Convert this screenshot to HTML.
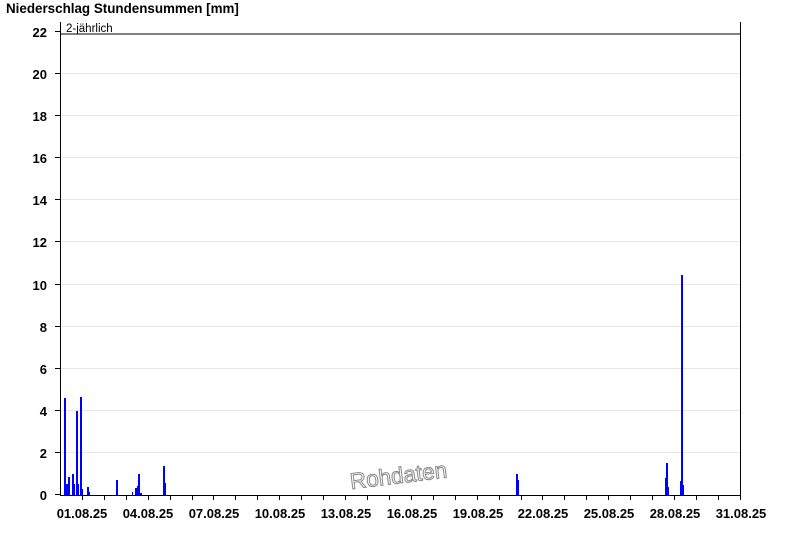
<!DOCTYPE html>
<html><head><style>body{margin:0;background:#fff}svg{display:block}</style></head>
<body>
<svg width="800" height="550" xmlns="http://www.w3.org/2000/svg" font-family="Liberation Sans, Arial, sans-serif">
<rect width="800" height="550" fill="#fff"/>
<text x="6" y="13" font-size="13.4" font-weight="bold" fill="#000">Niederschlag Stundensummen [mm]</text>
<g stroke="#e6e6e6" stroke-width="1">
<line x1="61" x2="740" y1="73.5" y2="73.5"/><line x1="61" x2="740" y1="115.5" y2="115.5"/>
<line x1="61" x2="740" y1="157.5" y2="157.5"/><line x1="61" x2="740" y1="199.5" y2="199.5"/>
<line x1="61" x2="740" y1="241.5" y2="241.5"/><line x1="61" x2="740" y1="284.5" y2="284.5"/>
<line x1="61" x2="740" y1="326.5" y2="326.5"/><line x1="61" x2="740" y1="368.5" y2="368.5"/>
<line x1="61" x2="740" y1="410.5" y2="410.5"/><line x1="61" x2="740" y1="452.5" y2="452.5"/>
</g>
<g stroke="#000" stroke-width="1">
<line x1="60.5" x2="60.5" y1="22" y2="496"/>
<line x1="740.5" x2="740.5" y1="22" y2="496"/>
<line x1="60" x2="741" y1="495.5" y2="495.5"/>
<line x1="60" x2="741" y1="34" y2="34"/>
<line x1="55" x2="60" y1="31.5" y2="31.5"/><line x1="55" x2="60" y1="73.5" y2="73.5"/>
<line x1="55" x2="60" y1="115.5" y2="115.5"/><line x1="55" x2="60" y1="157.5" y2="157.5"/>
<line x1="55" x2="60" y1="199.5" y2="199.5"/><line x1="55" x2="60" y1="241.5" y2="241.5"/>
<line x1="55" x2="60" y1="284.5" y2="284.5"/><line x1="55" x2="60" y1="326.5" y2="326.5"/>
<line x1="55" x2="60" y1="368.5" y2="368.5"/><line x1="55" x2="60" y1="410.5" y2="410.5"/>
<line x1="55" x2="60" y1="452.5" y2="452.5"/><line x1="55" x2="60" y1="494.5" y2="494.5"/>
</g>
<g stroke="#000" stroke-width="1">
<path d="M82.5 495v5M104.5 495v5M126.5 495v5M148.5 495v5M170.5 495v5M192.5 495v5M213.5 495v5M235.5 495v5M257.5 495v5M279.5 495v5M301.5 495v5M323.5 495v5M345.5 495v5M367.5 495v5M389.5 495v5M411.5 495v5M433.5 495v5M455.5 495v5M477.5 495v5M499.5 495v5M521.5 495v5M542.5 495v5M564.5 495v5M586.5 495v5M608.5 495v5M630.5 495v5M652.5 495v5M674.5 495v5M696.5 495v5M718.5 495v5M740.5 495v5"/>
</g>
<g font-size="13" font-weight="bold" text-anchor="end" fill="#000">
<text x="47" y="37">22</text><text x="47" y="79">20</text><text x="47" y="121">18</text>
<text x="47" y="163">16</text><text x="47" y="205">14</text><text x="47" y="247">12</text>
<text x="47" y="290">10</text><text x="47" y="332">8</text><text x="47" y="374">6</text>
<text x="47" y="416">4</text><text x="47" y="458">2</text><text x="47" y="500">0</text>
</g>
<g font-size="13" font-weight="bold" text-anchor="middle" fill="#000">
<text x="82" y="518">01.08.25</text><text x="148" y="518">04.08.25</text><text x="214" y="518">07.08.25</text>
<text x="280" y="518">10.08.25</text><text x="346" y="518">13.08.25</text><text x="412" y="518">16.08.25</text>
<text x="478" y="518">19.08.25</text><text x="543" y="518">22.08.25</text><text x="609" y="518">25.08.25</text>
<text x="675" y="518">28.08.25</text><text x="741" y="518">31.08.25</text>
</g>
<text x="66" y="32" font-size="11.5" fill="#000">2-jährlich</text>
<g fill="#0000ff">
<rect x="64" y="398" width="2" height="97"/><rect x="66" y="484" width="2" height="11"/>
<rect x="68" y="477" width="2" height="18"/><rect x="72" y="474" width="2" height="21"/>
<rect x="74" y="484" width="1" height="11"/><rect x="76" y="411" width="2" height="84"/>
<rect x="78" y="484" width="1" height="11"/><rect x="80" y="397" width="2" height="98"/>
<rect x="82" y="489" width="1" height="6"/><rect x="87" y="487" width="2" height="8"/>
<rect x="89" y="492" width="1" height="3"/>
<rect x="116" y="480" width="2" height="15"/><rect x="132" y="492" width="1" height="3"/>
<rect x="135" y="488" width="2" height="7"/><rect x="137" y="486" width="1" height="9"/>
<rect x="138" y="474" width="2" height="21"/><rect x="140" y="493" width="2" height="2"/>
<rect x="163" y="466" width="2" height="29"/><rect x="165" y="483" width="1" height="12"/>
<rect x="516" y="474" width="2" height="21"/><rect x="518" y="480" width="1" height="15"/>
<rect x="665" y="478" width="1" height="17"/><rect x="666" y="463" width="2" height="32"/>
<rect x="668" y="487" width="1" height="8"/><rect x="680" y="481" width="1" height="14"/>
<rect x="681" y="275" width="2" height="220"/><rect x="683" y="485" width="1" height="10"/>
</g>
<text x="349" y="483" font-size="22.5" fill="#fff" stroke="#888" stroke-width="1" transform="rotate(-7 400 470)">Rohdaten</text>
</svg>
</body></html>
